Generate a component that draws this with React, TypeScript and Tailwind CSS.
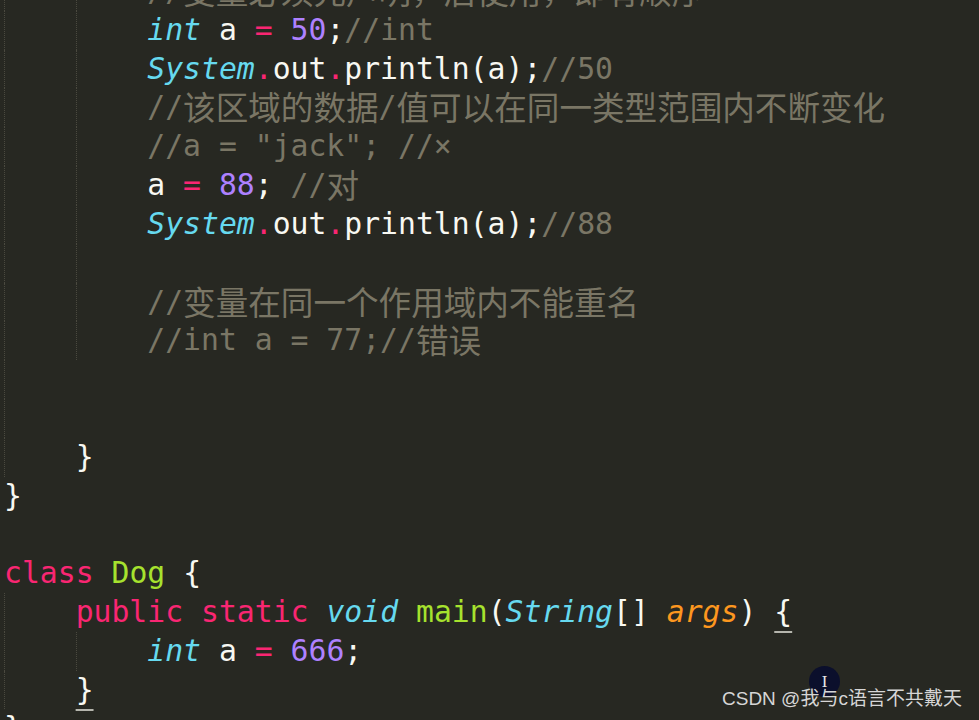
import React from "react";

type Kind = "k" | "o" | "n" | "t" | "p" | "c" | "f" | "a" | "u";
type Tok = [Kind, string];
type Line = { lvl: number; toks: Tok[] };

const colors: Record<Kind, string> = {
  k: "text-[#f92672]",
  o: "text-[#f92672]",
  n: "text-[#ae81ff]",
  t: "text-[#66d9ef] italic",
  p: "text-[#f8f8f2]",
  c: "text-[#7a7665]",
  f: "text-[#a6e22e]",
  a: "text-[#fd971f] italic",
  u: "text-[#f8f8f2] underline decoration-[#b5b5ad] decoration-2 underline-offset-[9px]",
};

const lines: Line[] = [
  { lvl: 2, toks: [["c", "//变量必须先声明，后使用，即有顺序"]] },
  {
    lvl: 2,
    toks: [["t", "int"], ["p", " a "], ["o", "="], ["p", " "], ["n", "50"], ["p", ";"], ["c", "//int"]],
  },
  {
    lvl: 2,
    toks: [["t", "System"], ["o", "."], ["p", "out"], ["o", "."], ["p", "println(a);"], ["c", "//50"]],
  },
  { lvl: 2, toks: [["c", "//该区域的数据/值可以在同一类型范围内不断变化"]] },
  { lvl: 2, toks: [["c", '//a = "jack"; //×']] },
  {
    lvl: 2,
    toks: [["p", "a "], ["o", "="], ["p", " "], ["n", "88"], ["p", "; "], ["c", "//对"]],
  },
  {
    lvl: 2,
    toks: [["t", "System"], ["o", "."], ["p", "out"], ["o", "."], ["p", "println(a);"], ["c", "//88"]],
  },
  { lvl: 2, toks: [] },
  { lvl: 2, toks: [["c", "//变量在同一个作用域内不能重名"]] },
  { lvl: 2, toks: [["c", "//int a = 77;//错误"]] },
  { lvl: 1, toks: [] },
  { lvl: 1, toks: [] },
  { lvl: 1, toks: [["p", "}"]] },
  { lvl: 0, toks: [["p", "}"]] },
  { lvl: 0, toks: [] },
  { lvl: 0, toks: [["k", "class"], ["p", " "], ["f", "Dog"], ["p", " {"]] },
  {
    lvl: 1,
    toks: [
      ["k", "public"],
      ["p", " "],
      ["k", "static"],
      ["p", " "],
      ["t", "void"],
      ["p", " "],
      ["f", "main"],
      ["p", "("],
      ["t", "String"],
      ["p", "[] "],
      ["a", "args"],
      ["p", ") "],
      ["u", "{"],
    ],
  },
  { lvl: 2, toks: [["t", "int"], ["p", " a "], ["o", "="], ["p", " "], ["n", "666"], ["p", ";"]] },
  { lvl: 1, toks: [["u", "}"]] },
  { lvl: 0, toks: [["p", "}"]] },
];

function Text({ kind, text }: { kind: Kind; text: string }) {
  const parts = text.split(/([\u3000-\u9fff\uff00-\uffef]+)/);
  return (
    <span className={colors[kind]}>
      {parts.map((part, i) =>
        i % 2 === 1 ? (
          <span
            key={i}
            className="font-['Noto_Sans_CJK_SC',sans-serif] text-[32.6px] leading-[0px] align-[-3px] not-italic"
          >
            {part}
          </span>
        ) : (
          <React.Fragment key={i}>{part}</React.Fragment>
        ),
      )}
    </span>
  );
}

function CodeLine({ line }: { line: Line }) {
  const cells = Array.from({ length: line.lvl });
  return (
    <div className="flex h-[38.82px] items-stretch">
      {cells.map((_, i) => (
        <div
          key={i}
          className="w-[71.64px] shrink-0 border-l border-dotted border-[#4a493f]"
        />
      ))}
      <div className="whitespace-pre leading-[38.82px]">
        {line.toks.map(([kind, text], i) => (
          <Text key={i} kind={kind} text={text} />
        ))}
      </div>
    </div>
  );
}

export default function App() {
  return (
    <div className="relative h-[720px] w-full overflow-hidden bg-[#272822]">
      <div className="-mt-[28px] pl-[4px] font-['DejaVu_Sans_Mono',monospace] text-[29.75px] text-[#f8f8f2]">
        {lines.map((line, i) => (
          <CodeLine key={i} line={line} />
        ))}
      </div>

      {/* cursor blob + CSDN watermark from the video overlay */}
      <div className="absolute left-[809px] top-[666px] flex h-[31px] w-[31px] items-center justify-center rounded-full bg-[#0b0f2c]">
        <span className="font-['Liberation_Serif',serif] text-[17px] leading-none text-[#e8e8e8]">
          I
        </span>
      </div>
      <div className="absolute left-[722px] top-[689px] font-['Liberation_Sans','Noto_Sans_CJK_SC',sans-serif] text-[19px] leading-none text-[#d6d6d6]">
        CSDN @我与c语言不共戴天
      </div>
    </div>
  );
}
